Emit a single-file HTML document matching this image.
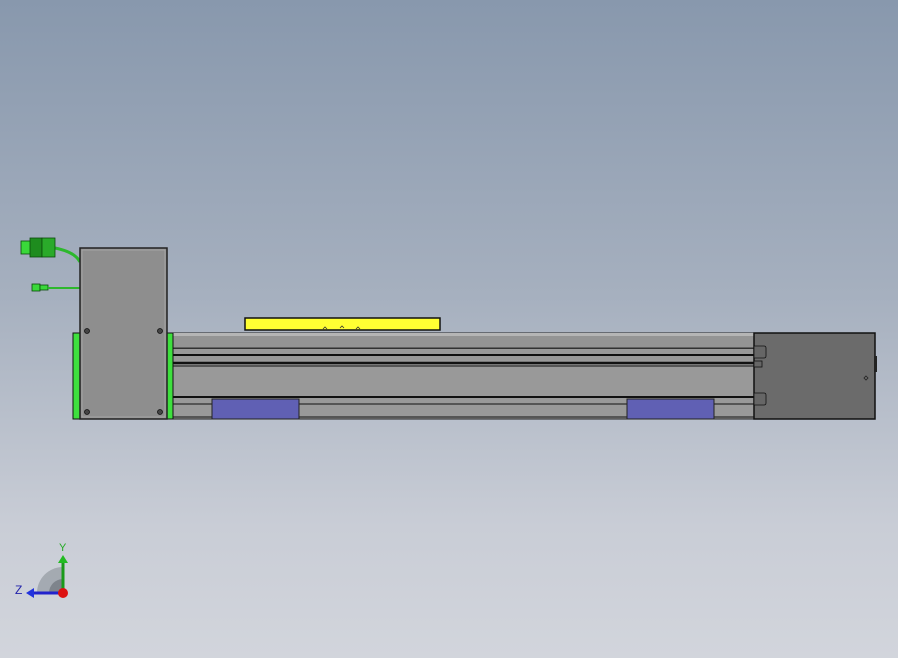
<!DOCTYPE html>
<html><head><style>
html,body{margin:0;padding:0}
body{width:898px;height:658px;overflow:hidden;background:linear-gradient(#8898ad 0%,#a6b0bf 45%,#c9cdd6 80%,#d2d5dc 100%);font-family:"Liberation Sans",sans-serif}
</style></head><body>
<svg width="898" height="658" viewBox="0 0 898 658" style="position:absolute;left:0;top:0">
<!-- cable connectors -->
<path d="M55 248 Q75 252 80 262" stroke="#2db82d" stroke-width="3" fill="none"/>
<rect x="21" y="241" width="10" height="13" fill="#3ad83a" stroke="#0a4a0a" stroke-width="0.8"/>
<rect x="30" y="238" width="12" height="19" fill="#1e8c1e" stroke="#0a4a0a" stroke-width="0.8"/>
<rect x="42" y="238" width="13" height="19" fill="#2aaa2a" stroke="#0a4a0a" stroke-width="0.8"/>
<rect x="32" y="284" width="8" height="7" fill="#3ad83a" stroke="#0a4a0a" stroke-width="0.8"/>
<rect x="40" y="285" width="8" height="5" fill="#3ad83a" stroke="#0a4a0a" stroke-width="0.8"/>
<line x1="48" y1="288" x2="80" y2="288" stroke="#2db82d" stroke-width="2"/>
<!-- left green plate -->
<rect x="73" y="333" width="8" height="86" fill="#3ee03e" stroke="#111" stroke-width="1"/>
<!-- rail body -->
<rect x="170" y="333" width="585" height="86" fill="#999" stroke="#222" stroke-width="1"/>
<rect x="170" y="333" width="585" height="3" fill="#b5b5b5"/>
<g stroke="#111">
<line x1="170" y1="348" x2="755" y2="348" stroke-width="1.5"/>
<line x1="170" y1="355" x2="755" y2="355" stroke-width="2"/>
<line x1="170" y1="363" x2="755" y2="363" stroke-width="2.5"/>
<line x1="170" y1="366" x2="755" y2="366" stroke-width="1"/>
<line x1="170" y1="397" x2="755" y2="397" stroke-width="2"/>
<line x1="170" y1="404" x2="755" y2="404" stroke-width="1"/>
<line x1="170" y1="417" x2="755" y2="417" stroke-width="1"/>
</g>
<rect x="170" y="336" width="585" height="12" fill="#8f8f8f" opacity="0.5"/>
<!-- blue pads -->
<rect x="212" y="399" width="87" height="20" fill="#6060b4" stroke="#222" stroke-width="1"/>
<rect x="627" y="399" width="87" height="20" fill="#6060b4" stroke="#222" stroke-width="1"/>
<!-- yellow -->
<rect x="245" y="318" width="195" height="12" fill="#ffff33" stroke="#111" stroke-width="1.5"/>
<g fill="none" stroke="#333" stroke-width="0.8">
<path d="M323 329 l2-2 2 2"/><path d="M340 328 l2-2 2 2"/><path d="M356 329 l2-2 2 2"/>
</g>
<!-- green strip -->
<rect x="167" y="333" width="6" height="86" fill="#3ee03e" stroke="#111" stroke-width="1"/>
<!-- motor box -->
<rect x="80" y="248" width="87" height="171" fill="#8e8e8e" stroke="#222" stroke-width="1.5"/>
<rect x="82" y="250" width="83" height="167" fill="none" stroke="#aaa" stroke-width="0.8"/>
<g fill="#444" stroke="#111" stroke-width="0.8">
<circle cx="87" cy="331" r="2.5"/><circle cx="160" cy="331" r="2.5"/>
<circle cx="87" cy="412" r="2.5"/><circle cx="160" cy="412" r="2.5"/>
</g>
<!-- end block -->
<rect x="754" y="333" width="121" height="86" fill="#6b6b6b" stroke="#111" stroke-width="1.5"/>
<rect x="874" y="356" width="3" height="16" fill="#222"/>
<path d="M754 346 h10 q2 0 2 2 v8 q0 2 -2 2 h-10z" fill="#666" stroke="#111" stroke-width="0.8"/>
<path d="M754 393 h10 q2 0 2 2 v8 q0 2 -2 2 h-10z" fill="#666" stroke="#111" stroke-width="0.8"/>
<rect x="754" y="361" width="8" height="6" fill="#666" stroke="#111" stroke-width="0.8"/>
<path d="M866 376 l2 2 -2 2 -2 -2z" fill="none" stroke="#222" stroke-width="0.8"/>
<!-- axis triad -->
<path d="M63 593 L37 593 A26 26 0 0 1 63 567 Z" fill="#9aa0a8" opacity="0.8"/>
<path d="M63 593 L49 593 A14 14 0 0 1 63 579 Z" fill="#7e848c"/>
<line x1="63" y1="593" x2="63" y2="562" stroke="#1a9a1a" stroke-width="3"/>
<path d="M58 563 L63 555 L68 563Z" fill="#22bb22"/>
<line x1="63" y1="593" x2="33" y2="593" stroke="#2222cc" stroke-width="3"/>
<path d="M34 588 L26 593 L34 598Z" fill="#2233dd"/>
<circle cx="63" cy="593" r="5" fill="#dd1111"/>
<text x="59" y="551" font-size="11" fill="#22aa22" font-family="Liberation Sans">Y</text>
<text x="15" y="594" font-size="12" fill="#2222aa" font-family="Liberation Sans">Z</text>
</svg>
</body></html>
